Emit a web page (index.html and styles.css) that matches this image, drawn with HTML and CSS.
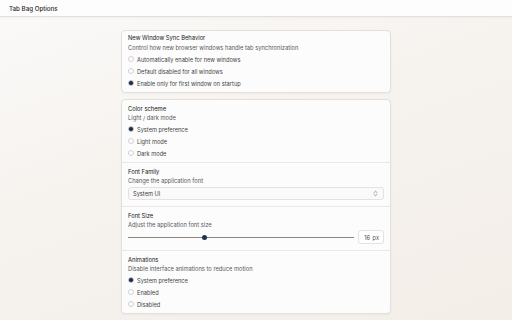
FILE: index.html
```html
<!DOCTYPE html>
<html lang="en">

<head>
    <meta charset="UTF-8">
    <meta name="viewport" content="width=device-width, initial-scale=1.0">
    <title>Tab Bag Options</title>
    <link rel="stylesheet" href="styles.css">
</head>

<body>
    <header class="topbar">Tab Bag Options</header>

    <main class="page">
        <section class="card card-single">
            <div class="setting">
                <h2 class="setting-title">New Window Sync Behavior</h2>
                <p class="setting-desc">Control how new browser windows handle tab synchronization</p>
                <ul class="radio-list">
                    <li><span class="radio"></span>Automatically enable for new windows</li>
                    <li><span class="radio"></span>Default disabled for all windows</li>
                    <li><span class="radio checked"></span>Enable only for first window on startup</li>
                </ul>
            </div>
        </section>

        <section class="card">
            <div class="setting">
                <h2 class="setting-title">Color scheme</h2>
                <p class="setting-desc">Light / dark mode</p>
                <ul class="radio-list">
                    <li><span class="radio checked"></span>System preference</li>
                    <li><span class="radio"></span>Light mode</li>
                    <li><span class="radio"></span>Dark mode</li>
                </ul>
            </div>

            <div class="setting">
                <h2 class="setting-title">Font Family</h2>
                <p class="setting-desc">Change the application font</p>
                <div class="select">
                    <span>System UI</span>
                    <svg class="chevrons" width="5" height="7" viewBox="0 0 5 7">
                        <path d="M1 2.6 L2.5 1.2 L4 2.6 M1 4.4 L2.5 5.8 L4 4.4" fill="none" stroke="#777" stroke-width="0.7" stroke-linecap="round" stroke-linejoin="round" />
                    </svg>
                </div>
            </div>

            <div class="setting">
                <h2 class="setting-title">Font Size</h2>
                <p class="setting-desc">Adjust the application font size</p>
                <div class="slider-row">
                    <div class="slider">
                        <div class="slider-track"></div>
                        <div class="slider-thumb" style="left: 34%"></div>
                    </div>
                    <div class="number-box">16 <span class="unit">px</span></div>
                </div>
            </div>

            <div class="setting">
                <h2 class="setting-title">Animations</h2>
                <p class="setting-desc">Disable interface animations to reduce motion</p>
                <ul class="radio-list">
                    <li><span class="radio checked"></span>System preference</li>
                    <li><span class="radio"></span>Enabled</li>
                    <li><span class="radio"></span>Disabled</li>
                </ul>
            </div>
        </section>
    </main>
</body>

</html>
```

FILE: styles.css
```css
html {
    overflow: hidden;
}

body {
    margin: 0;
    font-family: Inter, "Noto Sans", sans-serif;
    font-size: 5.7px;
    color: #333333;
    background: linear-gradient(160deg, #fbfaf9 0%, #f6f2ee 45%, #f3eee8 100%);
    height: 320px;
}

.topbar {
    height: 17px;
    box-sizing: border-box;
    padding: 0 9px;
    display: flex;
    align-items: center;
    background-color: #fdfdfd;
    border-bottom: 1px solid #e2e0de;
    box-shadow: 0 1px 2px rgba(0, 0, 0, 0.04);
    font-size: 6.2px;
    font-weight: 500;
    color: #2a2a2a;
}

.page {
    width: 270px;
    margin: 0 auto;
    padding-top: 13px;
}

.card {
    background-color: #fcfcfc;
    border: 1px solid #e3dfdb;
    border-radius: 4px;
    box-shadow: 0 1px 2px rgba(0, 0, 0, 0.03);
    margin-bottom: 6px;
}

.setting {
    padding: 4px 6px 3px;
    border-top: 1px solid #ebe8e5;
}

.setting:first-child {
    border-top: none;
}

.card-single .setting {
    padding-top: 2px;
}

.card-single .setting-title {
    margin-bottom: 1px;
}

.setting-title {
    margin: 0;
    font-size: 5.8px;
    font-weight: 400;
    line-height: 9px;
    color: #161616;
}

.setting-desc {
    margin: 0;
    font-size: 5.75px;
    line-height: 9px;
    color: #585858;
}

.radio-list {
    list-style: none;
    margin: 1px 0 0;
    padding: 0;
}

.radio-list li {
    height: 12px;
    display: flex;
    align-items: center;
    color: #444444;
}

.radio {
    width: 6px;
    height: 6px;
    box-sizing: border-box;
    margin: 0 3px 0 0;
    border: 0.7px solid #d4d1cf;
    border-radius: 50%;
    background-color: #ffffff;
    display: flex;
    align-items: center;
    justify-content: center;
}

.radio.checked {
    border-color: #bdbab8;
}

.radio.checked::after {
    content: "";
    width: 3.4px;
    height: 3.4px;
    border-radius: 50%;
    background-color: #1c2f4a;
}

.select {
    margin: 2px 0 3px;
    height: 13px;
    box-sizing: border-box;
    padding: 0 5px 0 4px;
    display: flex;
    align-items: center;
    justify-content: space-between;
    background-color: #fafafa;
    border: 1px solid #e4e2e0;
    border-radius: 3px;
    color: #3a3a3a;
}

.slider-row {
    margin: 1px 0 3px;
    height: 14px;
    display: flex;
    align-items: center;
    gap: 4px;
}

.slider {
    position: relative;
    flex: 1;
    height: 5px;
}

.slider-track {
    position: absolute;
    left: 0;
    right: 0;
    top: 2px;
    height: 1px;
    background-color: #8c857d;
}

.slider-thumb {
    position: absolute;
    top: 0;
    width: 5px;
    height: 5px;
    margin-left: -2.5px;
    border-radius: 50%;
    background-color: #1c3350;
}

.number-box {
    width: 26px;
    height: 14px;
    box-sizing: border-box;
    padding-right: 4px;
    display: flex;
    align-items: center;
    justify-content: flex-end;
    gap: 2.5px;
    background-color: #ffffff;
    border: 1px solid #e4e2e0;
    border-radius: 3px;
    color: #444444;
}

.unit {
    color: #555555;
}
```
